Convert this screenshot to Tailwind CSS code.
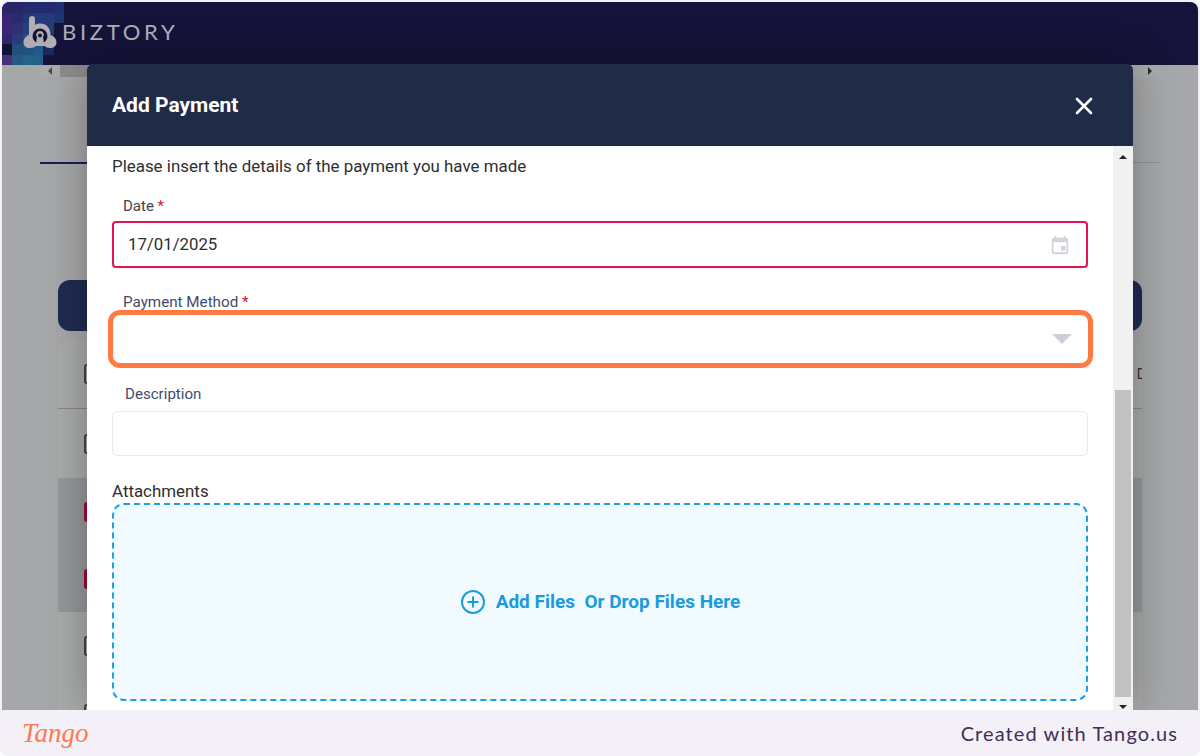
<!DOCTYPE html>
<html lang="en">
<head>
    <meta charset="UTF-8">
    <title>Add Payment</title>
    <script src="https://cdn.jsdelivr.net/npm/@tailwindcss/browser@4"></script>
</head>
<body class="bg-white font-['Roboto',sans-serif] overflow-hidden">
    <div class="w-[1200px] h-[756px] flex flex-col pt-[2px] px-[2px] relative overflow-hidden bg-[#f3f0f7] rounded-lg">

        <!-- Page behind the modal -->
        <div class="h-[708px] rounded-t-lg overflow-hidden flex flex-col bg-[#a6a7a8] relative">
            <header class="h-[63px] shrink-0 bg-[#16133a] flex items-center relative">
                <!-- pixel mosaic behind the logo -->
                <div class="absolute left-0 top-0 w-[62px] h-[63px] grid grid-cols-6 grid-rows-6">
                    <i class="bg-[#2a2468]"></i><i class="bg-[#28266a]"></i><i class="bg-[#232b6c]"></i><i class="bg-[#1f2d70]"></i><i class="bg-[#262a6c]"></i><i class="bg-[#1f2f72]"></i>
                    <i class="bg-[#3a2474]"></i><i class="bg-[#2a2a70]"></i><i class="bg-[#233870]"></i><i class="bg-[#243a7a]"></i><i class="bg-[#233a7a]"></i><i class="bg-[#1d3670]"></i>
                    <i class="bg-[#3c2478]"></i><i class="bg-[#2c3074]"></i><i class="bg-[#27407c]"></i><i class="bg-[#26447f]"></i><i class="bg-[#223c78]"></i><i class="bg-[#16133a]"></i>
                    <i class="bg-[#33246e]"></i><i class="bg-[#2b3a78]"></i><i class="bg-[#254a80]"></i><i class="bg-[#254c84]"></i><i class="bg-[#1c2a60]"></i><i class="bg-[#16133a]"></i>
                    <i class="bg-[#14123a]"></i><i class="bg-[#23507a]"></i><i class="bg-[#20547f]"></i><i class="bg-[#22588a]"></i><i class="bg-[#1a2a5a]"></i><i class="bg-[#16133a]"></i>
                    <i class="bg-[#45307a]"></i><i class="bg-[#245a86]"></i><i class="bg-[#23628a]"></i><i class="bg-[#22608a]"></i><i class="bg-[#16133a]"></i><i class="bg-[#16133a]"></i>
                </div>
                <svg class="relative ml-[21px] -mt-[2px] w-[34px] h-[34px]" viewBox="0 0 34 34">
                    <path d="M6 3 a3 3 0 0 1 6 0 V9 C13.500 8 15.500 7.500 17 7.500 C23.500 7.500 27.500 12 27.500 19 C31 20 33.500 23 33.500 26.500 C33.500 30 30.500 32 27 32 C24 32 23 31 21.500 30 H13 C11 31 10 32 7 32 C3 32 0.500 30 0.500 26.500 C0.500 23 3 20 6 19 Z" fill="#b0aeb4"/>
                    <circle cx="17" cy="20" r="7.500" fill="#16133a"/>
                    <path d="M17 15 a4 4 0 0 1 3 6.500 L21 28 H13 L14 21.500 A4 4 0 0 1 17 15 Z" fill="#b0aeb4"/>
                    <circle cx="17" cy="19.500" r="2" fill="#16133a"/>
                </svg>
                <span class="relative ml-[5px] -mt-[4px] text-[22px] font-['Lato',sans-serif] tracking-[3.7px] text-[#b0aeb4]">BIZTORY</span>
            </header>
            <div class="h-[12px] mx-[38px] flex items-center bg-[#a9aaab]">
                <span class="w-[20px] flex justify-center"><span class="w-0 h-0 border-y-[4px] border-y-transparent border-r-[4px] border-r-[#4b4b4b]"></span></span>
                <div class="w-[28px] h-full bg-[#8c8c8c]"></div>
                <span class="ml-auto mr-[8px] w-0 h-0 border-y-[4px] border-y-transparent border-l-[4px] border-l-[#2b2b2b]"></span>
            </div>
            <div class="mt-[85px] mx-[38px] h-px bg-[#8f9092]">
                <div class="w-[47px] h-[2px] bg-[#1f1a5c]"></div>
            </div>
            <div class="mt-[117px] mx-[56px] h-[51px] rounded-xl bg-[#1f2b52]"></div>
            <div class="mt-[9px] mx-[56px] flex-1 rounded-t-xl bg-[#a9aaaa] flex flex-col overflow-hidden">
                <div class="h-[69px] shrink-0 flex items-center pl-[26px] border-b border-[#858687]">
                    <span class="w-[20px] h-[20px] rounded-[3px] border-2 border-[#444]"></span>
                    <span class="ml-auto -mr-[4px] text-[14px] text-[#333]">D</span>
                </div>
                <div class="h-[69px] shrink-0 flex items-center pl-[26px]"><span class="w-[20px] h-[20px] rounded-[3px] border-2 border-[#444]"></span></div>
                <div class="h-[67px] shrink-0 flex items-center pl-[26px] bg-[#94979a]"><span class="w-[20px] h-[20px] rounded-[3px] bg-[#a3072e]"></span></div>
                <div class="h-[67px] shrink-0 flex items-center pl-[26px] bg-[#94979a]"><span class="w-[20px] h-[20px] rounded-[3px] bg-[#a3072e]"></span></div>
                <div class="h-[68px] shrink-0 flex items-center pl-[26px]"><span class="w-[20px] h-[20px] rounded-[3px] border-2 border-[#444]"></span></div>
                <div class="h-[68px] shrink-0 flex items-center pl-[26px]"><span class="w-[20px] h-[20px] rounded-[3px] border-2 border-[#444]"></span></div>
            </div>
        </div>

        <!-- Modal -->
        <div class="absolute left-[87px] top-[64px] w-[1046px] h-[646px] flex flex-col rounded-t-md shadow-[0_0_40px_rgba(0,0,0,0.3)]">
            <div class="h-[82px] shrink-0 bg-[#202b47] rounded-t-md flex items-center justify-between pl-[25px] pr-[39px]">
                <h2 class="mt-[2px] text-[21px] font-bold text-white">Add Payment</h2>
                <svg class="mt-[2px] w-[20px] h-[20px]" viewBox="0 0 20 20" fill="none" stroke="white" stroke-width="2.600" stroke-linecap="round"><path d="M3 3 L17 17 M17 3 L3 17"/></svg>
            </div>
            <div class="flex-1 bg-white flex min-h-0">
                <div class="flex-1 pl-[25px] pr-[25px] pt-[10px] flex flex-col">
                    <p class="text-[16.9px] leading-[20px] text-[#2f2f2f]">Please insert the details of the payment you have made</p>

                    <label class="mt-[21px] ml-[11px] text-[15px] leading-[18px] text-[#3d4450]">Date <span class="text-[#d0142c]">*</span></label>
                    <div class="mt-[6px] h-[47px] border-2 border-[#e3154f] rounded-[4px] flex items-center justify-between pl-[14px] pr-[15px]">
                        <span class="text-[16.8px] text-[#2f2f2f]">17/01/2025</span>
                        <svg class="w-[22px] h-[22px]" viewBox="0 0 24 24" fill="#d1d5db"><path d="M19 4h-1V2h-2v2H8V2H6v2H5a2 2 0 0 0-2 2v14a2 2 0 0 0 2 2h14a2 2 0 0 0 2-2V6a2 2 0 0 0-2-2zm0 16H5V9h14v11zm-6-7h5v5h-5z"/></svg>
                    </div>

                    <label class="mt-[25px] ml-[11px] text-[15.2px] leading-[18px] text-[#3f4b6b]">Payment Method <span class="text-[#d0142c]">*</span></label>
                    <div class="-mt-[1px] -ml-[4px] -mr-[5px] h-[58px] border-[5px] border-[#ff7a42] rounded-[12px] flex items-center justify-end pr-[16px]">
                        <span class="w-0 h-0 border-x-[10px] border-x-transparent border-t-[10px] border-t-[#cbd0d8]"></span>
                    </div>

                    <label class="mt-[17px] ml-[13px] text-[15.1px] leading-[18px] text-[#3f4b6b]">Description</label>
                    <div class="mt-[8px] h-[45px] border border-[#e5e7eb] rounded-md"></div>

                    <p class="mt-[25px] text-[16.9px] leading-[20px] text-[#2f2f2f]">Attachments</p>
                    <div class="mt-[2px] h-[198px] rounded-xl border-2 border-dashed border-[#1f9fe3] bg-[#f1faff] flex items-center justify-center gap-[10px] text-[#1c9bdc]">
                        <svg class="w-[26px] h-[26px]" viewBox="0 0 26 26" fill="none" stroke="#1c9bdc" stroke-width="2"><circle cx="13" cy="13" r="11"/><path d="M13 7.500v11M7.500 13h11"/></svg>
                        <span class="text-[19px] font-bold">Add Files&nbsp; Or Drop Files Here</span>
                    </div>
                </div>
                <!-- Scrollbar -->
                <div class="w-[20px] shrink-0 bg-[#f1f1f1] flex flex-col items-center pt-[9px] pb-[1px]">
                    <span class="w-0 h-0 border-x-[4px] border-x-transparent border-b-[4px] border-b-[#222]"></span>
                    <div class="flex-1 w-full flex flex-col justify-end pb-[8px] px-[2px]">
                        <div class="h-[307px] bg-[#c1c1c1]"></div>
                    </div>
                    <span class="w-0 h-0 border-x-[4px] border-x-transparent border-t-[4px] border-t-[#222]"></span>
                </div>
            </div>
        </div>

        <!-- Tango footer -->
        <footer class="relative z-10 -mx-[2px] h-[46px] shrink-0 bg-[#f3f0f7] flex items-center justify-between pl-[22px] pr-[22px]">
            <span class="font-['Liberation_Serif',serif] italic text-[27px] text-[#ff7a50]">Tango</span>
            <span class="font-['Lato',sans-serif] text-[20px] tracking-[1.1px] text-[#3d3154]">Created with Tango.us</span>
        </footer>
    </div>
</body>
</html>
